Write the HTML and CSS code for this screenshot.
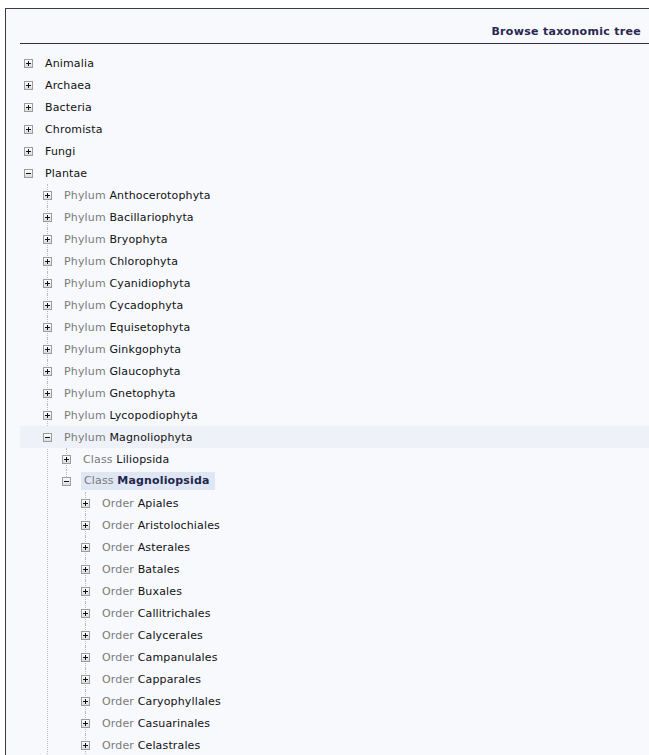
FILE: index.html
```html
<!DOCTYPE html>
<html>
<head>
<meta charset="utf-8">
<link rel="stylesheet" href="styles.css">
</head>
<body>
<div class="panel">
  <div class="header"><span class="title">Browse taxonomic tree</span></div>
  <ul class="tree">
    <li><div class="row"><span class="ic plus"></span><span class="lbl">Animalia</span></div></li>
    <li><div class="row"><span class="ic plus"></span><span class="lbl">Archaea</span></div></li>
    <li><div class="row"><span class="ic plus"></span><span class="lbl">Bacteria</span></div></li>
    <li><div class="row"><span class="ic plus"></span><span class="lbl">Chromista</span></div></li>
    <li><div class="row"><span class="ic plus"></span><span class="lbl">Fungi</span></div></li>
    <li><div class="row"><span class="ic minus"></span><span class="lbl">Plantae</span></div>
      <ul class="children cont">
        <li><div class="row"><span class="ic plus"></span><span class="lbl"><span class="rank">Phylum</span> Anthocerotophyta</span></div></li>
        <li><div class="row"><span class="ic plus"></span><span class="lbl"><span class="rank">Phylum</span> Bacillariophyta</span></div></li>
        <li><div class="row"><span class="ic plus"></span><span class="lbl"><span class="rank">Phylum</span> Bryophyta</span></div></li>
        <li><div class="row"><span class="ic plus"></span><span class="lbl"><span class="rank">Phylum</span> Chlorophyta</span></div></li>
        <li><div class="row"><span class="ic plus"></span><span class="lbl"><span class="rank">Phylum</span> Cyanidiophyta</span></div></li>
        <li><div class="row"><span class="ic plus"></span><span class="lbl"><span class="rank">Phylum</span> Cycadophyta</span></div></li>
        <li><div class="row"><span class="ic plus"></span><span class="lbl"><span class="rank">Phylum</span> Equisetophyta</span></div></li>
        <li><div class="row"><span class="ic plus"></span><span class="lbl"><span class="rank">Phylum</span> Ginkgophyta</span></div></li>
        <li><div class="row"><span class="ic plus"></span><span class="lbl"><span class="rank">Phylum</span> Glaucophyta</span></div></li>
        <li><div class="row"><span class="ic plus"></span><span class="lbl"><span class="rank">Phylum</span> Gnetophyta</span></div></li>
        <li><div class="row"><span class="ic plus"></span><span class="lbl"><span class="rank">Phylum</span> Lycopodiophyta</span></div></li>
        <li><div class="row hl"><span class="ic minus"></span><span class="lbl"><span class="rank">Phylum</span> Magnoliophyta</span></div>
          <ul class="children">
            <li><div class="row"><span class="ic plus"></span><span class="lbl"><span class="rank">Class</span> Liliopsida</span></div></li>
            <li><div class="row"><span class="ic minus"></span><span class="lbl sel"><span class="rank">Class</span> <b>Magnoliopsida</b></span></div>
              <ul class="children cont">
                <li><div class="row"><span class="ic plus"></span><span class="lbl"><span class="rank">Order</span> Apiales</span></div></li>
                <li><div class="row"><span class="ic plus"></span><span class="lbl"><span class="rank">Order</span> Aristolochiales</span></div></li>
                <li><div class="row"><span class="ic plus"></span><span class="lbl"><span class="rank">Order</span> Asterales</span></div></li>
                <li><div class="row"><span class="ic plus"></span><span class="lbl"><span class="rank">Order</span> Batales</span></div></li>
                <li><div class="row"><span class="ic plus"></span><span class="lbl"><span class="rank">Order</span> Buxales</span></div></li>
                <li><div class="row"><span class="ic plus"></span><span class="lbl"><span class="rank">Order</span> Callitrichales</span></div></li>
                <li><div class="row"><span class="ic plus"></span><span class="lbl"><span class="rank">Order</span> Calycerales</span></div></li>
                <li><div class="row"><span class="ic plus"></span><span class="lbl"><span class="rank">Order</span> Campanulales</span></div></li>
                <li><div class="row"><span class="ic plus"></span><span class="lbl"><span class="rank">Order</span> Capparales</span></div></li>
                <li><div class="row"><span class="ic plus"></span><span class="lbl"><span class="rank">Order</span> Caryophyllales</span></div></li>
                <li><div class="row"><span class="ic plus"></span><span class="lbl"><span class="rank">Order</span> Casuarinales</span></div></li>
                <li><div class="row"><span class="ic plus"></span><span class="lbl"><span class="rank">Order</span> Celastrales</span></div></li>
              </ul>
            </li>
          </ul>
        </li>
      </ul>
    </li>
  </ul>
</div>
</body>
</html>
```
FILE: styles.css
```css
html, body {
  margin: 0;
  padding: 0;
  background: #ffffff;
  overflow: hidden;
}
body {
  font-family: "DejaVu Sans", Verdana, sans-serif;
  font-size: 11px;
  color: #111;
  letter-spacing: 0.15px;
}
.panel {
  margin: 8px 0 0 5px;
  border-top: 1px solid #3a3a44;
  border-left: 1px solid #3a3a44;
  background: #f7f9fd;
  padding-left: 14px;
  min-height: 800px;
}
.header {
  height: 34px;
  border-bottom: 1px solid #2e2e3e;
  display: flex;
  justify-content: flex-end;
  align-items: flex-end;
  padding-right: 8px;
}
.title {
  font-weight: bold;
  color: #27284e;
  padding-bottom: 5px;
  letter-spacing: 0.3px;
}
ul {
  list-style: none;
  margin: 0;
  padding: 0;
}
.tree {
  padding-top: 8px;
}
.children {
  padding-left: 19px;
}
.children > li {
  position: relative;
}
.children > li::before {
  content: "";
  position: absolute;
  left: 8px;
  top: 0;
  bottom: 0;
  border-left: 1px dotted #b8bcc4;
}
.children > li:last-child::before {
  bottom: auto;
  height: 11px;
}
.children.cont > li:last-child::before {
  bottom: 0;
  height: auto;
}
.row {
  height: 22px;
  display: flex;
  align-items: center;
  padding-left: 4px;
  position: relative;
}
.row.hl {
  margin-left: -19px;
  padding-left: 23px;
  background: #eef1f8;
}
.ic {
  width: 7px;
  height: 7px;
  border: 1px solid #9c9c9c;
  background: linear-gradient(#ffffff, #dcdcdc);
  position: relative;
  flex: none;
  z-index: 1;
}
.ic::before {
  content: "";
  position: absolute;
  left: 1px;
  top: 3px;
  width: 5px;
  height: 1px;
  background: #111;
}
.ic.plus::after {
  content: "";
  position: absolute;
  left: 3px;
  top: 1px;
  width: 1px;
  height: 5px;
  background: #111;
}
.lbl {
  margin-left: 12px;
  white-space: nowrap;
}
.rank {
  color: #7a7a7a;
}
.lbl.sel {
  margin-left: 10px;
  padding: 2px 5px 3px 3px;
  background: #dfe6f4;
}
.lbl.sel b {
  color: #24264e;
}
```
